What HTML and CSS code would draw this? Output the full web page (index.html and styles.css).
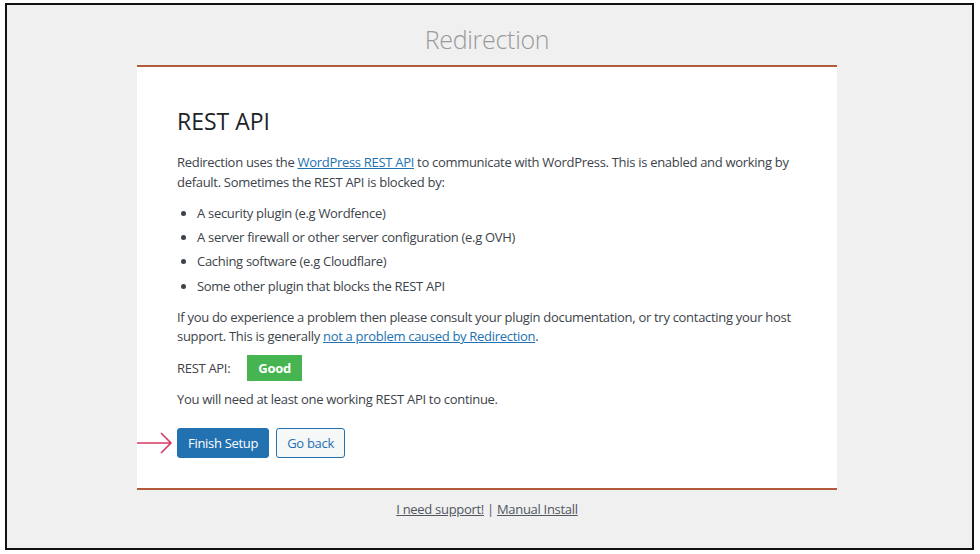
FILE: index.html
```html
<!DOCTYPE html>
<html>
<head>
<meta http-equiv="Content-Type" content="text/html; charset=utf-8"/>
<title>Redirection</title>
<link rel="stylesheet" href="styles.css">
</head>
<body>
<div class="frame">
  <div class="wrap">
    <h1 class="brand">Redirection</h1>

    <div class="card">
      <!-- pointer in front of the main action -->
      <svg class="pointer" width="36" height="22" viewBox="0 0 36 22">
        <path d="M0 11 H34 M24 1 L34 11 L24 21" fill="none" stroke="#d63a62" stroke-width="1.6"/>
      </svg>

      <h2>REST API</h2>

      <p class="intro">Redirection uses the <a href="#">WordPress REST API</a> to communicate with WordPress. This is enabled and working by
      default. Sometimes the REST API is blocked by:</p>

      <ul>
        <li>A security plugin (e.g Wordfence)</li>
        <li>A server firewall or other server configuration (e.g OVH)</li>
        <li>Caching software (e.g Cloudflare)</li>
        <li>Some other plugin that blocks the REST API</li>
      </ul>

      <p class="note">If you do experience a problem then please consult your plugin documentation, or try contacting your host
      support. This is generally <a href="#">not a problem caused by Redirection</a>.</p>

      <div class="api-status">
        <span class="api-label">REST API:</span>
        <span class="badge">Good</span>
      </div>

      <p>You will need at least one working REST API to continue.</p>

      <div class="actions">
        <button class="btn btn-primary">Finish Setup</button>
        <button class="btn">Go back</button>
      </div>
    </div>

    <div class="footer">
      <a href="#">I need support!</a> | <a href="#">Manual Install</a>
    </div>
  </div>
</div>
</body>
</html>
```

FILE: styles.css
```css
html, body {
  margin: 0;
  padding: 0;
}

body {
  font-family: "Open Sans", "Noto Sans", sans-serif;
  font-size: 13px;
  line-height: 1.4em;
  letter-spacing: -0.3px;
  color: #3c434a;
  background-color: #fff;
}

.frame {
  margin: 3px 6px 4px 5px;
  height: 543px;
  padding-right: 5px;
  border: 2px solid #111;
  background-color: #f0f0f1;
}

.wrap {
  width: 700px;
  margin: 0 auto;
}

.brand {
  margin: 0;
  padding-top: 19px;
  height: 41px;
  font-size: 25px;
  font-weight: 300;
  line-height: 30px;
  color: #9a9a9a;
  text-align: center;
}

.card {
  position: relative;
  background-color: #fff;
  border-top: 2px solid #b35a3d;
  border-bottom: 2px solid #b35a3d;
  padding: 40px 40px 30px;
}

.pointer {
  position: absolute;
  left: 0;
  top: 365px;
}

h2 {
  margin: 0 0 17px;
  font-size: 23px;
  font-weight: 400;
  line-height: 29px;
  letter-spacing: 0;
  color: #1d2327;
}

p {
  margin: 0 0 13px;
  line-height: 1.5;
}

p.intro {
  margin-bottom: 12px;
}

p.note {
  margin-bottom: 8px;
}

a {
  color: #2271b1;
}

ul {
  margin: 0 0 13px;
  padding-left: 20px;
}

li {
  margin-bottom: 6px;
}

.api-status {
  display: flex;
  align-items: center;
  gap: 17px;
  margin-bottom: 9px;
}

.badge {
  display: inline-block;
  padding: 0 11px;
  height: 26px;
  line-height: 26px;
  background-color: #46b450;
  color: #fff;
  font-weight: 700;
}

.actions {
  display: flex;
  gap: 7px;
  margin-top: 19px;
}

.btn {
  font-family: inherit;
  font-size: 13px;
  letter-spacing: inherit;
  height: 30px;
  padding: 0 10px;
  border: 1px solid #2271b1;
  border-radius: 3px;
  background-color: #f6f7f7;
  color: #2271b1;
}

.btn-primary {
  background-color: #2271b1;
  color: #fff;
}

.footer {
  padding-top: 10px;
  text-align: center;
  color: #50575e;
}

.footer a {
  color: #50575e;
}
```
